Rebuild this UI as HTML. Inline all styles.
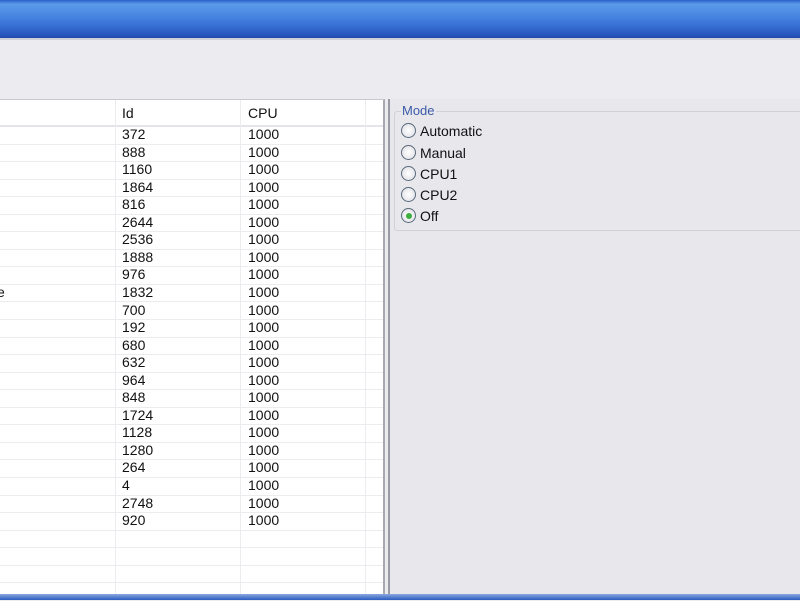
<!DOCTYPE html>
<html><head><style>
body{margin:0;width:800px;height:600px;overflow:hidden;background:#ecebef;font-family:"Liberation Sans",sans-serif;position:relative}
.title{position:absolute;left:0;top:0;width:800px;height:38px;background:linear-gradient(#2a5fc8 0,#5a9ae8 4px,#4f8de4 12px,#3a74d8 24px,#2652b8 36px,#1f46a8 38px)}
.sep{position:absolute;left:0;top:38px;width:800px;height:2px;background:#cfd0d8}
.list{position:absolute;left:0;top:99px;width:383px;height:495px;background:#fff;border-right:2px solid #a8a8b0;border-top:1px solid #c8c8d0}
.hdr{position:absolute;left:0;top:0;width:383px;height:25px;border-bottom:2px solid #e4e4ea;background:#fff}
.vl{position:absolute;top:0;width:1px;height:495px;background:#ececf0}
.row{position:absolute;left:0;width:383px;height:17.55px;border-bottom:1px solid #ececf0;font-size:14px;line-height:17px;color:#111}
.c1{position:absolute;left:122px}.c2{position:absolute;left:248px}
.hd{position:absolute;top:5px;font-size:14px;color:#111}
.right{position:absolute;left:388px;top:99px;width:412px;height:495px;border-left:2px solid #9a9aa4;background:#e8e7ec}
.grp{position:absolute;left:4px;top:12px;width:420px;height:118px;border:1px solid #d0d0d8;border-radius:3px}
.lg{position:absolute;left:401px;top:103px;font-size:13px;color:#3a5aa8;background:#e8e7ec;padding:0 1px}
.rb{position:absolute;left:401px;font-size:14px;color:#111;height:18px;line-height:18px}
.rb i{display:inline-block;width:13px;height:13px;border:1px solid #5a6a7a;border-radius:50%;background:radial-gradient(#fff,#dcdce4);vertical-align:-2px;margin-right:4px;position:relative}
.rb i.on::after{content:"";position:absolute;left:3.5px;top:3.5px;width:6px;height:6px;border-radius:50%;background:#3cae3c}
.bot{position:absolute;left:0;top:594px;width:800px;height:6px;background:linear-gradient(#8aa8e0,#2c5cc0)}
</style></head><body>
<div class="title"></div><div class="sep"></div>
<div class="list">
<div class="hdr"><span class="hd" style="left:122px">Id</span><span class="hd" style="left:248px">CPU</span></div>
<div class="vl" style="left:115px"></div><div class="vl" style="left:240px"></div><div class="vl" style="left:365px"></div>
<div id="rows"></div>
</div>
<div class="right"><div class="grp"></div></div>
<div class="lg">Mode</div>
<div class="rb" style="top:122px"><i></i>Automatic</div>
<div class="rb" style="top:144px"><i></i>Manual</div>
<div class="rb" style="top:165px"><i></i>CPU1</div>
<div class="rb" style="top:186px"><i></i>CPU2</div>
<div class="rb" style="top:207px"><i class="on"></i>Off</div>
<div class="bot"></div>
<script>
var ids=[372,888,1160,1864,816,2644,2536,1888,976,1832,700,192,680,632,964,848,1724,1128,1280,264,4,2748,920,"","","",""];
var h="";
for(var i=0;i<ids.length;i++){var t=26+i*17.55;h+='<div class="row" style="top:'+t+'px">'+(i==9?'<span style="position:absolute;left:-3px">e</span>':'')+'<span class="c1">'+ids[i]+'</span><span class="c2">'+(ids[i]!==""?1000:"")+'</span></div>';}
document.getElementById("rows").innerHTML=h;
</script>
</body></html>
